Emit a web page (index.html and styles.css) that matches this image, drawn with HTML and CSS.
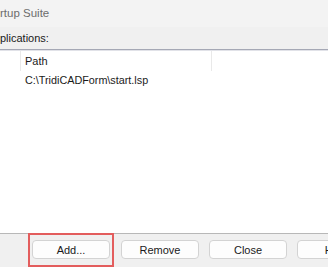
FILE: index.html
```html
<!DOCTYPE html>
<html lang="en">
<head>
    <meta charset="UTF-8">
    <meta name="viewport" content="width=device-width, initial-scale=1.0">
    <title>Startup Suite</title>
    <link rel="stylesheet" href="styles.css">
</head>
<body>

<div class="dialog">
    <div class="titlebar">rtup Suite</div>

    <div class="label">plications:</div>

    <div class="list">
        <div class="list-header">
            <div class="col col-icon"></div>
            <div class="col col-path">Path</div>
            <div class="col col-rest"></div>
        </div>
        <div class="list-row">C:\TridiCADForm\start.lsp</div>
    </div>

    <div class="footer">
        <div class="highlight">
            <button class="btn">Add...</button>
        </div>
        <button class="btn btn-remove">Remove</button>
        <button class="btn btn-close">Close</button>
        <button class="btn btn-help">Help</button>
    </div>
</div>

</body>
</html>
```

FILE: styles.css
```css
body {
    margin: 0;
    width: 328px;
    height: 267px;
    overflow: hidden;
    background-color: #f0f0f0;
    font-family: "Liberation Sans", Arial, sans-serif;
    font-size: 11px;
    color: #1a1a1a;
}
.dialog {
    display: flex;
    flex-direction: column;
    height: 267px;
}
.titlebar {
    height: 28px;
    line-height: 26px;
    background-color: #f3f3f3;
    color: #6c6c6c;
    font-size: 11.5px;
}
.label {
    height: 21px;
    padding-top: 1px;
    line-height: 21px;
    color: #1a1a1a;
}
.list {
    height: 186px;
    background-color: #ffffff;
    border-top: 1px solid #a5a8b5;
    box-shadow: inset 0 1px 0 #e1e2e8;
}
.list-header {
    display: grid;
    grid-template-columns: 21px 191px 1fr;
    height: 19px;
    margin-top: 1px;
}
.col {
    line-height: 19px;
    padding-top: 1px;
    padding-left: 4px;
}
.col-icon, .col-path {
    border-right: 1px solid #e9e9e9;
}
.list-row {
    height: 17px;
    line-height: 17px;
    padding-top: 2px;
    padding-left: 25px;
    font-size: 10.8px;
}
.footer {
    flex: 1;
    display: flex;
    align-items: flex-start;
    border-top: 1px solid #b8b8b8;
}
.highlight {
    margin-top: -1px;
    margin-left: 28px;
    padding: 5px 2px 6px 2px;
    border: 2px solid #e35d5d;
}
.btn {
    width: 78px;
    height: 19px;
    padding: 0;
    background-color: #fdfdfd;
    border: 1px solid #d3d3d3;
    border-radius: 4px;
    font-family: "Liberation Sans", Arial, sans-serif;
    font-size: 11px;
    color: #1a1a1a;
}
.btn-remove, .btn-close, .btn-help {
    margin-top: 6px;
    flex-shrink: 0;
}
.btn-remove {
    margin-left: 7px;
}
.btn-close, .btn-help {
    margin-left: 10px;
}
```
